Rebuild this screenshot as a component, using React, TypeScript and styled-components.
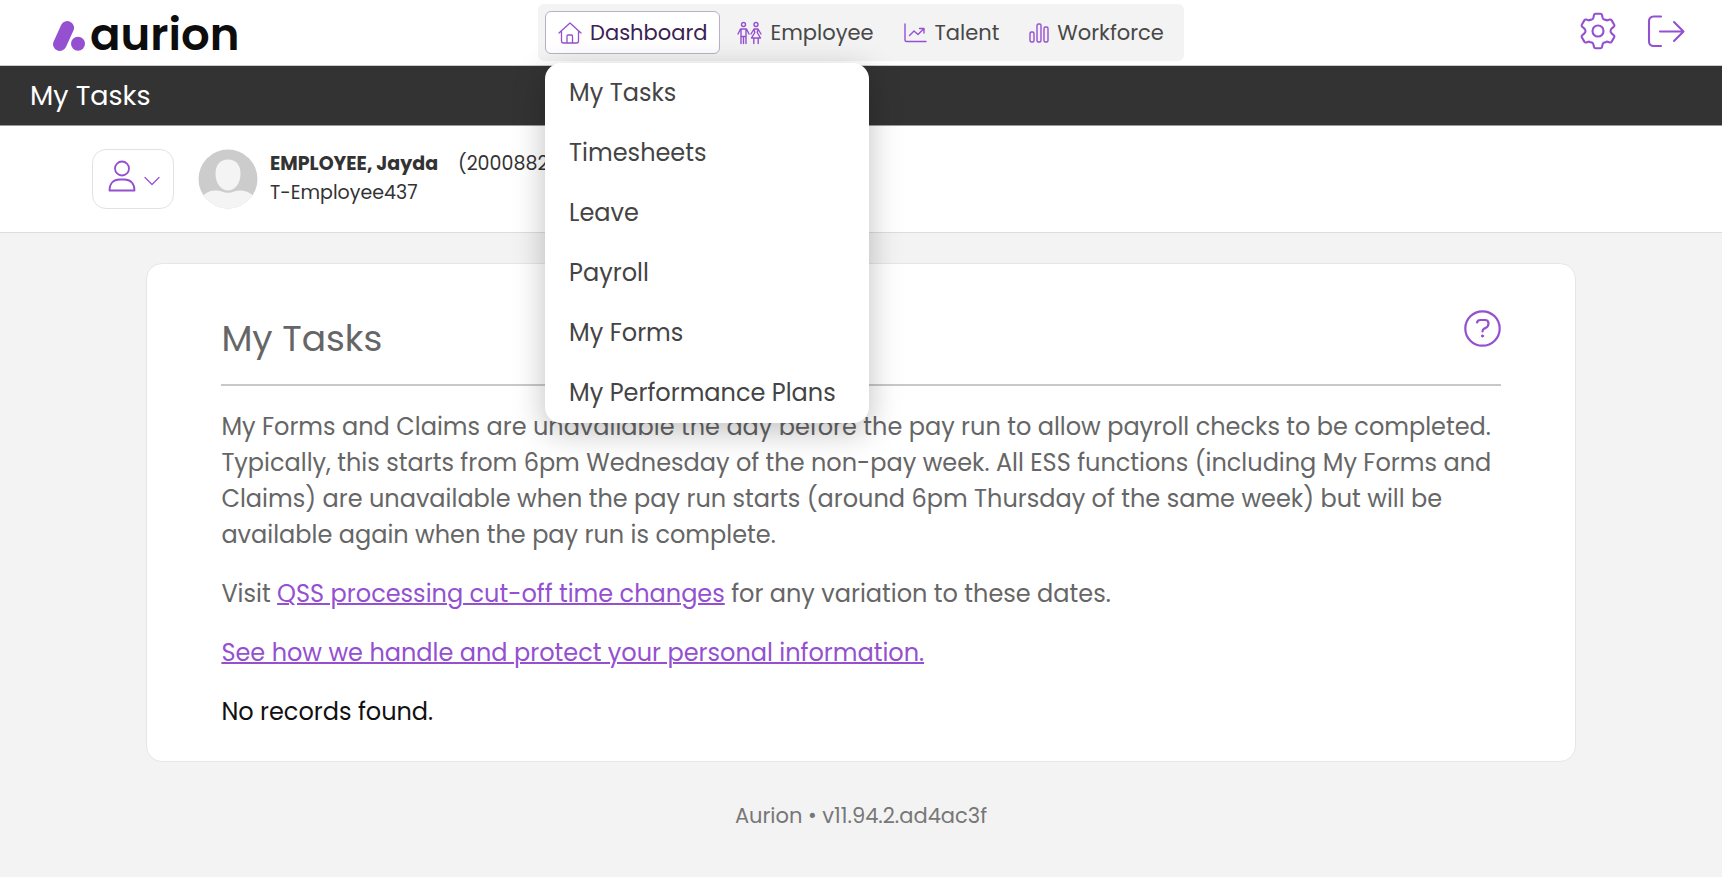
import React from "react";
import styled, { createGlobalStyle, css } from "styled-components";

const purple = "#9450d0";

const GlobalStyle = createGlobalStyle`
  *, *::before, *::after { box-sizing: border-box; }
  body {
    margin: 0;
    background: #f3f3f3;
    color: #666;
    font-family: Poppins, Inter, "Open Sans", sans-serif;
    font-size: 24px;
    line-height: 36px;
  }
  button, a { font-family: inherit; }
`;

const Icon = styled.svg`
  display: block;
  flex: none;
  fill: none;
  stroke: ${purple};
  stroke-linecap: round;
  stroke-linejoin: round;
`;

const Header = styled.header`
  display: grid;
  grid-template-columns: 1fr auto 1fr;
  align-items: center;
  height: 66px;
  padding: 0 37px;
  background: #fff;
  border-bottom: 1px solid #ccc;
`;

const Logo = styled.a`
  display: flex;
  align-items: center;
  gap: 4px;
  justify-self: start;
  padding: 4px 0 0 15px;
  color: #0d0d0d;
  text-decoration: none;
`;

const LogoMark = styled.svg`
  display: block;
  width: 34px;
  height: 34px;
  fill: ${purple};
`;

const Wordmark = styled.span`
  font-size: 45px;
  font-weight: 600;
  line-height: 60px;
`;

const Nav = styled.nav`
  display: flex;
  gap: 4px;
  height: 57px;
  padding: 7px;
  background: #f3f3f3;
  border-radius: 6px;
`;

const NavItem = styled.div`
  position: relative;
`;

const NavButton = styled.button<{ $active?: boolean }>`
  display: flex;
  align-items: center;
  gap: 8px;
  height: 43px;
  padding: 0 12px;
  border: 1px solid transparent;
  border-radius: 6px;
  background: transparent;
  color: #484848;
  font-size: 21px;
  line-height: 30px;
  ${(p) =>
    p.$active &&
    css`
      background: #fff;
      border-color: #b9b0c6;
      color: #3c2153;
    `}
`;

const Menu = styled.ul`
  position: absolute;
  z-index: 10;
  top: 52px;
  left: 0;
  width: 324px;
  margin: 0;
  padding: 0;
  list-style: none;
  background: #fff;
  border-radius: 16px;
  box-shadow: 0 8px 32px rgba(0, 0, 0, 0.25);
`;

const MenuLink = styled.a`
  display: block;
  padding: 12px 24px;
  color: #444;
  text-decoration: none;
  white-space: nowrap;
`;

const Actions = styled.div`
  display: flex;
  gap: 30px;
  justify-self: end;
  padding-bottom: 3px;
`;

const IconButton = styled.button`
  padding: 0;
  border: 0;
  background: transparent;
`;

const TitleBar = styled.div`
  padding: 12px 30px 11px;
  background: #333;
  border-bottom: 1px solid #999;
  color: #fff;
  font-size: 27px;
`;

const ProfileBar = styled.section`
  display: flex;
  align-items: center;
  height: 107px;
  padding: 0 92px;
  background: #fff;
  border-bottom: 1px solid #ddd;
`;

const PersonButton = styled.button`
  display: flex;
  align-items: center;
  gap: 8px;
  width: 82px;
  height: 60px;
  padding: 0 14px 6px 15px;
  border: 1px solid #e2e2e2;
  border-radius: 14px;
  background: #fff;
`;

const Avatar = styled.svg`
  display: block;
  width: 60px;
  height: 60px;
  margin: 0 12px 0 24px;
`;

const Person = styled.div`
  padding-bottom: 3px;
  color: #333;
  font-size: 19px;
  line-height: 29px;
`;

const PersonName = styled.strong`
  margin-right: 20px;
  font-weight: 700;
`;

const Card = styled.main`
  width: 83%;
  margin: 30px auto 0;
  padding: 46px 74px 31px;
  background: #fff;
  border: 1px solid #e6e6e6;
  border-radius: 16px;
`;

const CardHeader = styled.div`
  display: flex;
  align-items: flex-start;
  justify-content: space-between;
  height: 76px;
  border-bottom: 2px solid #c8c8c8;
`;

const Heading = styled.h1`
  margin: 3px 0 0;
  font-size: 36px;
  font-weight: 400;
  line-height: 52px;
`;

const Paragraph = styled.p<{ $dark?: boolean }>`
  margin: 23px 0 0;
  color: ${(p) => (p.$dark ? "#111" : "#666")};
`;

const TextLink = styled.a`
  color: ${purple};
  text-decoration: underline;
  text-decoration-thickness: 2px;
`;

const Footer = styled.footer`
  padding: 36px 0 42px;
  color: #777;
  font-size: 21px;
  text-align: center;
`;

const HomeIcon = () => (
  <Icon width="24" height="24" viewBox="0 0 24 24" strokeWidth="1.3">
    <path d="M1 12 12 2 23 12M3.5 10V20a2 2 0 0 0 2 2h13a2 2 0 0 0 2-2V10M9 22V15a1 1 0 0 1 1-1h3.500a1 1 0 0 1 1 1V22" />
  </Icon>
);

const PeopleIcon = () => (
  <Icon width="25" height="24" viewBox="0 0 25 24" strokeWidth="1.4">
    <circle cx="6.500" cy="3.500" r="2" />
    <path d="M1 13 3.500 8h6L12 13M4 8.500v14M9 8.500v14M6.500 15.500v7M4 15.500h5" />
    <circle cx="19" cy="3.500" r="2" />
    <path d="M14 13l3-5h4L24 13M17 8.500l.8 3-3.300 5.500h9L20.200 11.500 21 8.500M16.800 17.500v5M21.200 17.500v5" />
  </Icon>
);

const TrendIcon = () => (
  <Icon width="23" height="20" viewBox="0 0 23 20" strokeWidth="1.4">
    <path d="M1 1v16a1.500 1.500 0 0 0 1.500 1.500H22" />
    <path d="M5.500 12.500 10 8 14 11.500 20 5.500M15.500 5.500H20v4.500" />
  </Icon>
);

const BarsIcon = () => (
  <Icon width="20" height="20" viewBox="0 0 20 20" strokeWidth="1.400">
    <rect x="1" y="9" width="4" height="10" rx="1.500" />
    <rect x="8" y="1" width="4" height="18" rx="1.500" />
    <rect x="15" y="4" width="4" height="15" rx="1.500" />
  </Icon>
);

const GearIcon = () => (
  <Icon width="38" height="38" viewBox="-19 -19 38 38" strokeWidth="2.100">
    <circle r="5.500" />
    <path d="M-2.500-17.200H2.500Q3.700-17.200 4-16L4.700-13Q5.200-11.500 6.700-11.400 7.700-11.300 8.900-10.600L11.700-11.400Q13-11.700 13.700-10.600L16.200-6.300Q16.800-5.300 16-4.500L13.600-2.400Q12.500-1.200 12.500 0 12.500 1.200 13.600 2.400L16 4.500Q16.800 5.300 16.200 6.300L13.700 10.600Q13 11.700 11.700 11.400L8.900 10.600Q7.700 11.300 6.700 11.400 5.200 11.500 4.700 13L4 16Q3.700 17.200 2.500 17.200H-2.500Q-3.700 17.200-4 16L-4.700 13Q-5.200 11.500-6.700 11.400-7.700 11.300-8.900 10.600L-11.700 11.400Q-13 11.700-13.700 10.600L-16.200 6.300Q-16.800 5.300-16 4.500L-13.600 2.400Q-12.500 1.200-12.500 0-12.500-1.200-13.600-2.400L-16-4.500Q-16.800-5.300-16.200-6.300L-13.700-10.600Q-13-11.700-11.700-11.400L-8.900-10.600Q-7.700-11.300-6.700-11.400-5.200-11.500-4.700-13L-4-16Q-3.700-17.200-2.500-17.200Z" />
  </Icon>
);

const LogoutIcon = () => (
  <Icon width="38" height="38" viewBox="0 0 38 38" strokeWidth="2.100">
    <path d="M14 4.500H6.500A4.500 4.500 0 0 0 2 9V29.500a4.500 4.500 0 0 0 4.500 4.500H14M13 19.500h23M27 10 36.500 19.500 27 29" />
  </Icon>
);

const UserIcon = () => (
  <Icon width="28" height="32" viewBox="0 0 28 32" strokeWidth="1.800">
    <circle cx="14" cy="8.500" r="7" />
    <path d="M1.500 30.500c0-7 4-11 10-11h5c6 0 10 4 10 11Z" />
  </Icon>
);

const ChevronIcon = () => (
  <Icon width="16" height="24" viewBox="0 0 16 24" strokeWidth="1.200">
    <path d="M1 13.500 8 20.500 15 13.500" />
  </Icon>
);

const HelpIcon = () => (
  <Icon width="37" height="37" viewBox="0 0 37 37" strokeWidth="2.200">
    <circle cx="18.500" cy="18.500" r="17.200" />
    <path d="M13 12.500Q13.500 10 16.500 10H21Q24.500 10 24.500 13.500 24.500 16.500 21.500 18L20 18.800Q18.500 19.600 18.500 21.500" />
    <circle cx="18.500" cy="26" r="1.100" fill={purple} stroke={purple} strokeWidth="1" />
  </Icon>
);

const menuItems = ["My Tasks", "Timesheets", "Leave", "Payroll", "My Forms", "My Performance Plans"];

export default function App() {
  return (
    <>
      <GlobalStyle />
      <Header>
        <Logo href="#home">
          <LogoMark viewBox="0 0 34 34" aria-hidden="true">
            <path d="M15.300 9.800 7.800 26.200" fill="none" stroke={purple} strokeWidth="13.500" strokeLinecap="round" />
            <circle cx="26" cy="25.700" r="7" />
          </LogoMark>
          <Wordmark>aurion</Wordmark>
        </Logo>
        <Nav>
          <NavItem>
            <NavButton type="button" $active aria-expanded="true">
              <HomeIcon />
              Dashboard
            </NavButton>
            <Menu>
              {menuItems.map((item) => (
                <li key={item}>
                  <MenuLink href="#menu">{item}</MenuLink>
                </li>
              ))}
            </Menu>
          </NavItem>
          <NavButton type="button"><PeopleIcon />Employee</NavButton>
          <NavButton type="button"><TrendIcon />Talent</NavButton>
          <NavButton type="button"><BarsIcon />Workforce</NavButton>
        </Nav>
        <Actions>
          <IconButton type="button" aria-label="Settings"><GearIcon /></IconButton>
          <IconButton type="button" aria-label="Log out"><LogoutIcon /></IconButton>
        </Actions>
      </Header>
      <TitleBar>My Tasks</TitleBar>
      <ProfileBar>
        <PersonButton type="button" aria-label="Select employee">
          <UserIcon />
          <ChevronIcon />
        </PersonButton>
        <Avatar viewBox="0 0 60 60" aria-hidden="true">
          <clipPath id="avatar-clip"><circle cx="30" cy="30" r="29.500" /></clipPath>
          <g clipPath="url(#avatar-clip)">
            <rect width="60" height="60" fill="#ccc" />
            <path d="M0 60Q2 43 16 41.500 21 41 24 42.500 30 45 36 42.500 39 41 44 41.500 58 43 60 60Z" fill="#f4f4f4" />
            <path d="M30 10.500C39 10.500 42.500 17 42.500 25 42.500 34 37 41.500 30 41.500S17.500 34 17.500 25C17.500 17 21 10.500 30 10.500Z" fill="#f4f4f4" />
          </g>
        </Avatar>
        <Person>
          <div><PersonName>EMPLOYEE, Jayda</PersonName>(2000882</div>
          <div>T-Employee437</div>
        </Person>
      </ProfileBar>
      <Card>
        <CardHeader>
          <Heading>My Tasks</Heading>
          <IconButton type="button" aria-label="Help"><HelpIcon /></IconButton>
        </CardHeader>
        <Paragraph>
          My Forms and Claims are unavailable the day before the pay run to allow payroll checks to be completed.
          Typically, this starts from 6pm Wednesday of the non-pay week. All ESS functions (including My Forms and
          Claims) are unavailable when the pay run starts (around 6pm Thursday of the same week) but will be
          available again when the pay run is complete.
        </Paragraph>
        <Paragraph>
          Visit <TextLink href="#cutoff">QSS processing cut-off time changes</TextLink> for any variation to these dates.
        </Paragraph>
        <Paragraph>
          <TextLink href="#privacy">See how we handle and protect your personal information.</TextLink>
        </Paragraph>
        <Paragraph $dark>No records found.</Paragraph>
      </Card>
      <Footer>Aurion • v11.94.2.ad4ac3f</Footer>
    </>
  );
}
